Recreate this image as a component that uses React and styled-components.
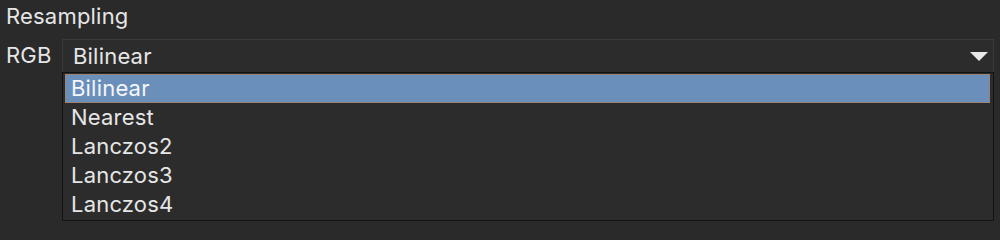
import React from 'react'
import styled, { createGlobalStyle } from 'styled-components'

const Global = createGlobalStyle`
  html, body {
    margin: 0;
    background: #2a2a2a;
  }
  body {
    font-family: Inter, "Noto Sans", sans-serif;
    color: #e6e6e6;
  }
`

const Panel = styled.div`
  width: 1000px;
  height: 223px;
  overflow: hidden;
  background: #2a2a2a;
  padding: 1px 0 0 6px;
  box-sizing: border-box;
  font-size: 22px;
  letter-spacing: 0.2px;
`

const Title = styled.div`
  line-height: 30px;
  height: 38px;
`

const Row = styled.div`
  display: flex;
  align-items: flex-start;
  gap: 12px;
`

const Label = styled.div`
  line-height: 33px;
  width: 44px;
`

const Field = styled.div`
  display: flex;
  flex-direction: column;
  width: 932px;
`

const Combo = styled.div`
  display: flex;
  align-items: center;
  justify-content: space-between;
  height: 33px;
  line-height: 31px;
  box-sizing: border-box;
  border: 1px solid #3b3b3b;
  border-bottom: none;
  background: #2c2c2c;
  padding: 0 5px 0 10px;
`

const Arrow = styled.svg`
  width: 18px;
  height: 9px;
  fill: #e8e8e8;
`

const Popup = styled.ul`
  list-style: none;
  margin: 0;
  padding: 1px 3px 1px 2px;
  border: 1px solid #121212;
  background: #2c2c2c;
  height: 149px;
  box-sizing: border-box;
`

const Item = styled.li`
  line-height: 27px;
  height: 29px;
  padding: 0 5px;
  box-sizing: border-box;
  border: 1px dotted ${p => (p.$active ? '#c77a30' : 'transparent')};
  background: ${p => (p.$active ? '#6a8fba' : 'transparent')};
  color: ${p => (p.$active ? '#f4f6fa' : '#e6e6e6')};
`

const options = ['Bilinear', 'Nearest', 'Lanczos2', 'Lanczos3', 'Lanczos4']

export default function App() {
  return (
    <>
      <Global />
      <Panel>
        <Title>Resampling</Title>
        <Row>
          <Label>RGB</Label>
          <Field>
            <Combo>
              <span>Bilinear</span>
              <Arrow viewBox="0 0 18 9">
                <polygon points="0,0 18,0 9,9" />
              </Arrow>
            </Combo>
            <Popup>
              {options.map((o, i) => (
                <Item key={o} $active={i === 0}>{o}</Item>
              ))}
            </Popup>
          </Field>
        </Row>
      </Panel>
    </>
  )
}
